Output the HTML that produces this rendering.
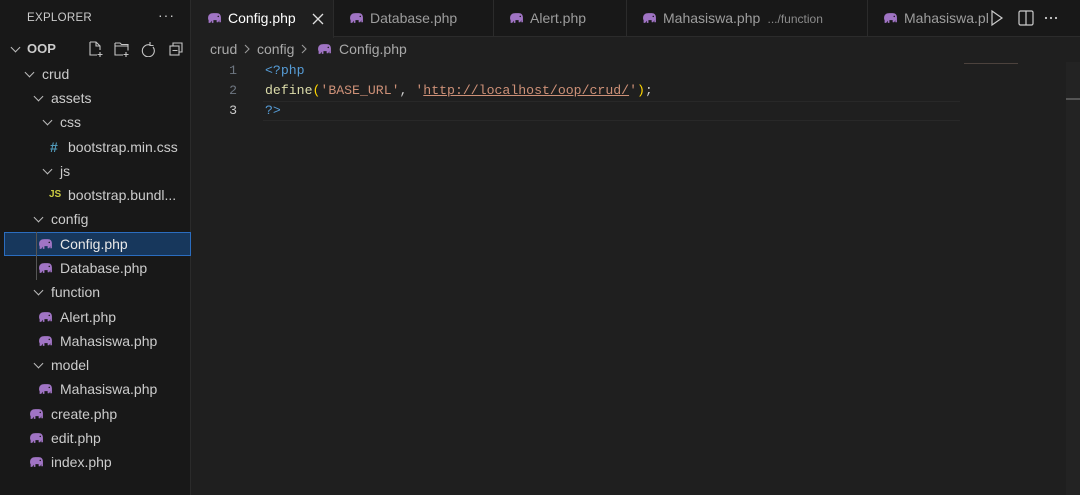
<!DOCTYPE html>
<html><head><style>
*{margin:0;padding:0;box-sizing:border-box}
body{width:1080px;height:495px;background:#1f1f1f;font-family:"Liberation Sans",sans-serif;color:#ccc;position:relative;overflow:hidden}
#side{position:absolute;left:0;top:0;width:191px;height:495px;background:#181818;border-right:1px solid #2b2b2b}
.hdr{position:absolute;left:27px;top:12px;font-size:11.5px;color:#ccc;letter-spacing:.3px}
.row{position:absolute;left:0;width:191px;height:24px;font-size:14px;line-height:24px;color:#ccc;white-space:nowrap}
.chev{position:absolute;top:7px;width:7px;height:7px;border-right:1.3px solid #bbb;border-bottom:1.3px solid #bbb;transform:rotate(45deg)}
.ele{position:absolute;top:6px}
#tabs{position:absolute;left:192px;top:0;width:888px;height:37px;background:#181818;border-bottom:1px solid #2b2b2b}
.tab{position:absolute;top:0;height:37px;line-height:37px;font-size:14px;color:#9d9d9d;border-right:1px solid #2b2b2b;white-space:nowrap;overflow:hidden}
.tab svg{position:absolute;top:12px}
.mono{font-family:"Liberation Mono",monospace;font-size:13.2px}
.ln{position:absolute;left:210px;width:27px;text-align:right;color:#6e7681}
.code{position:absolute;left:265px;white-space:pre}
</style></head><body>
<svg width="0" height="0" style="position:absolute"><defs><symbol id="e" viewBox="0 0 14 11"><path d="M1 5.5C1 2.5 3 1 6 1h3c2.5 0 4 1.5 4 4v4.5h-1.5V7.5L10.5 9.5H9V7.5H6V10H4.5V8L3 10H1.5V7.5C1 7 1 6 1 5.5z" fill="#a074c4"/><circle cx="10.5" cy="4" r="0.7" fill="#181818"/></symbol></defs></svg>
<div id="side">
<div class="hdr">EXPLORER</div>
<div style="position:absolute;left:158px;top:7px;font-size:14px;color:#ccc;letter-spacing:1px">···</div>
<div class="row" style="top:37px"><span class="chev" style="left:12px"></span><b style="position:absolute;left:27px;font-size:13px">OOP</b>
<svg style="position:absolute;left:88px;top:4px" width="96" height="16" fill="none" stroke="#c5c5c5" stroke-width="1.1"><path d="M2 1h6l4 4v4M2 1v13h7M8 1v4h4M12 11v5M9.5 13.5h5"/><path d="M27 2h5l1.5 1.5H40v6M27 2v12h8M27 5h13M38 11v5M35.5 13.5h5"/><path d="M62 4a6 6 0 1 0 3 2M62 1v3.5h3.5"/><rect x="82" y="5" width="9" height="9"/><path d="M85 5V2h9v9h-3M84.5 9.5h5"/></svg></div>
<div class="row" style="top:62px"><span class="chev" style="left:26px"></span><span style="position:absolute;left:42px">crud</span></div>
<div class="row" style="top:86px"><span class="chev" style="left:35px"></span><span style="position:absolute;left:51px">assets</span></div>
<div class="row" style="top:110px"><span class="chev" style="left:44px"></span><span style="position:absolute;left:60px">css</span></div>
<div class="row" style="top:135px"><span style="position:absolute;left:50px;color:#519aba;font-weight:bold">#</span><span style="position:absolute;left:68px">bootstrap.min.css</span></div>
<div class="row" style="top:159px"><span class="chev" style="left:44px"></span><span style="position:absolute;left:60px">js</span></div>
<div class="row" style="top:183px"><span style="position:absolute;left:49px;color:#cbcb41;font-size:10px;font-weight:bold">JS</span><span style="position:absolute;left:68px">bootstrap.bundl...</span></div>
<div class="row" style="top:207px"><span class="chev" style="left:35px"></span><span style="position:absolute;left:51px">config</span></div>
<div class="row" style="top:232px;left:4px;width:187px;background:#17375c;border:1px solid #2b6dbf"><svg class="ele" style="left:33px;top:5px" width="15" height="12"><use href="#e"/></svg><span style="position:absolute;left:55px;top:-1px;color:#e8e8e8">Config.php</span></div>
<div class="row" style="top:256px"><svg class="ele" style="left:38px" width="15" height="12"><use href="#e"/></svg><span style="position:absolute;left:60px">Database.php</span></div>
<div class="row" style="top:280px"><span class="chev" style="left:35px"></span><span style="position:absolute;left:51px">function</span></div>
<div class="row" style="top:305px"><svg class="ele" style="left:38px" width="15" height="12"><use href="#e"/></svg><span style="position:absolute;left:60px">Alert.php</span></div>
<div class="row" style="top:329px"><svg class="ele" style="left:38px" width="15" height="12"><use href="#e"/></svg><span style="position:absolute;left:60px">Mahasiswa.php</span></div>
<div class="row" style="top:353px"><span class="chev" style="left:35px"></span><span style="position:absolute;left:51px">model</span></div>
<div class="row" style="top:377px"><svg class="ele" style="left:38px" width="15" height="12"><use href="#e"/></svg><span style="position:absolute;left:60px">Mahasiswa.php</span></div>
<div class="row" style="top:402px"><svg class="ele" style="left:29px" width="15" height="12"><use href="#e"/></svg><span style="position:absolute;left:51px">create.php</span></div>
<div class="row" style="top:426px"><svg class="ele" style="left:29px" width="15" height="12"><use href="#e"/></svg><span style="position:absolute;left:51px">edit.php</span></div>
<div class="row" style="top:450px"><svg class="ele" style="left:29px" width="15" height="12"><use href="#e"/></svg><span style="position:absolute;left:51px">index.php</span></div>
<div style="position:absolute;left:36px;top:256px;width:1px;height:24px;background:#555"></div>
<div style="position:absolute;left:36px;top:232px;width:1px;height:24px;background:#555"></div>
</div>
<div id="tabs">
<div class="tab" style="left:0;width:142px;background:#1f1f1f;color:#fff;height:38px"><svg style="left:15px" width="15" height="12"><use href="#e"/></svg><span style="position:absolute;left:36px">Config.php</span><svg style="left:120px;top:13px" width="12" height="12" stroke="#ddd" stroke-width="1.3"><path d="M1 1l10 10M11 1L1 11"/></svg></div>
<div class="tab" style="left:142px;width:160px"><svg style="left:15px" width="15" height="12"><use href="#e"/></svg><span style="position:absolute;left:36px">Database.php</span></div>
<div class="tab" style="left:302px;width:133px"><svg style="left:15px" width="15" height="12"><use href="#e"/></svg><span style="position:absolute;left:36px">Alert.php</span></div>
<div class="tab" style="left:435px;width:241px"><svg style="left:15px" width="15" height="12"><use href="#e"/></svg><span style="position:absolute;left:36px">Mahasiswa.php <span style="font-size:12px;color:#8b8b8b">&nbsp;.../function</span></span></div>
<div class="tab" style="left:676px;width:120px;border:none"><svg style="left:15px" width="15" height="12"><use href="#e"/></svg><span style="position:absolute;left:36px">Mahasiswa.php</span></div>
<div style="position:absolute;left:796px;top:0;width:92px;height:36px;background:#181818">
<svg width="92" height="36" fill="none" stroke="#ccc" stroke-width="1.2"><path d="M4 11l10 7-10 7z"/><rect x="31" y="11" width="14" height="14" rx="1.5"/><path d="M38 11v14"/><g fill="#ccc" stroke="none"><circle cx="58" cy="18" r="1.1"/><circle cx="63" cy="18" r="1.1"/><circle cx="68" cy="18" r="1.1"/></g></svg></div>
</div>
<div style="position:absolute;left:210px;top:41px;font-size:14px;color:#a9a9a9;white-space:nowrap">crud <svg width="8" height="10" style="margin:0 2px" fill="none" stroke="#999" stroke-width="1.1"><path d="M2 1l4 4-4 4"/></svg> config <svg width="8" height="10" style="margin:0 2px" fill="none" stroke="#999" stroke-width="1.1"><path d="M2 1l4 4-4 4"/></svg> <svg width="15" height="12" style="vertical-align:-1px;margin:0 3px"><use href="#e"/></svg> Config.php</div>
<div class="mono">
<div class="ln" style="top:63px">1</div><div class="ln" style="top:83px">2</div><div class="ln" style="top:103px;color:#ccc">3</div>
<div class="code" style="top:63px;color:#569cd6">&lt;?php</div>
<div class="code" style="top:83px;color:#ccc"><span style="color:#dcdcaa">define</span><span style="color:#ffd700">(</span><span style="color:#ce9178">'BASE_URL'</span>, <span style="color:#ce9178">'<u>http://localhost/oop/crud/</u>'</span><span style="color:#ffd700">)</span>;</div>
<div class="code" style="top:103px;color:#569cd6">?&gt;</div>
</div>
<div style="position:absolute;left:263px;top:101px;width:697px;height:20px;border-top:1px solid #282828;border-bottom:1px solid #282828"></div>
<div style="position:absolute;left:964px;top:63px;width:54px;height:1px;background:#6a5a52;opacity:.6"></div>
<div style="position:absolute;left:1066px;top:62px;width:14px;height:433px;background:#232323"></div>
<div style="position:absolute;left:1066px;top:98px;width:14px;height:2px;background:#555"></div>
</body></html>
